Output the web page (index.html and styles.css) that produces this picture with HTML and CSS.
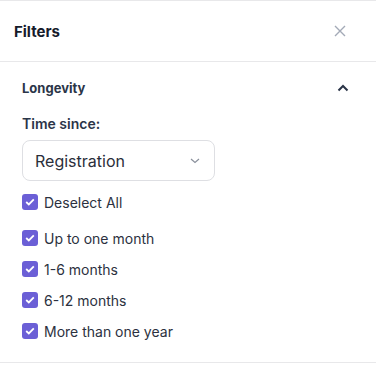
FILE: index.html
```html
<!DOCTYPE html>
<html>
  <head>
    <meta charset="utf-8">
    <title>Filters</title>
    <link rel="stylesheet" href="styles.css">
  </head>
  <body>
    <div class="panel">
      <div class="panel_head">
        <span class="panel_title">Filters</span>
        <svg class="close_icon" width="12" height="12" viewBox="0 0 12 12"><path d="M1 1L11 11M11 1L1 11" stroke="#a3aab7" stroke-width="1.4" fill="none"/></svg>
      </div>
      <div class="section">
        <div class="section_head">
          <span class="section_title">Longevity</span>
          <svg class="chev_up" width="12" height="8" viewBox="0 0 12 8"><path d="M1.5 6.5L6 2L10.5 6.5" stroke="#2a3447" stroke-width="2" fill="none"/></svg>
        </div>
        <div class="field_label">Time since:</div>
        <div class="select_box">
          <span>Registration</span>
          <svg width="10" height="6" viewBox="0 0 10 6"><path d="M1 1L5 4.5L9 1" stroke="#8a909c" stroke-width="1.2" fill="none"/></svg>
        </div>
        <label class="check_row all"><span class="box"><svg width="10" height="8" viewBox="0 0 10 8"><path d="M1.2 4L3.8 6.4L8.8 1.4" stroke="#fff" stroke-width="1.8" fill="none"/></svg></span>Deselect All</label>
        <div class="opts">
          <label class="check_row"><span class="box"><svg width="10" height="8" viewBox="0 0 10 8"><path d="M1.2 4L3.8 6.4L8.8 1.4" stroke="#fff" stroke-width="1.8" fill="none"/></svg></span>Up to one month</label>
          <label class="check_row"><span class="box"><svg width="10" height="8" viewBox="0 0 10 8"><path d="M1.2 4L3.8 6.4L8.8 1.4" stroke="#fff" stroke-width="1.8" fill="none"/></svg></span>1-6 months</label>
          <label class="check_row"><span class="box"><svg width="10" height="8" viewBox="0 0 10 8"><path d="M1.2 4L3.8 6.4L8.8 1.4" stroke="#fff" stroke-width="1.8" fill="none"/></svg></span>6-12 months</label>
          <label class="check_row"><span class="box"><svg width="10" height="8" viewBox="0 0 10 8"><path d="M1.2 4L3.8 6.4L8.8 1.4" stroke="#fff" stroke-width="1.8" fill="none"/></svg></span>More than one year</label>
        </div>
      </div>
    </div>
  </body>
</html>
```

FILE: styles.css
```css
body,html{margin:0;background:#fff;}
body{font-family:Inter,"Noto Sans",sans-serif;color:#2c3140;}
.panel{width:376px;border-top:1px solid #e8e8ea;}
.panel_head{height:60px;display:flex;align-items:center;justify-content:space-between;padding:0 30px 0 14px;border-bottom:1px solid #e8e8ea;}
.panel_title{font-size:15px;font-weight:700;color:#161b2b;}
.close_icon{display:block;}
.section{padding:0 27px 22px 22px;border-bottom:1px solid #e8e8ea;}
.section_head{height:52px;display:flex;align-items:center;justify-content:space-between;}
.section_title{font-size:13px;font-weight:700;color:#2b3548;}
.chev_up{display:block;}
.field_label{font-size:14px;font-weight:600;color:#2b3548;line-height:20px;}
.select_box{width:165px;height:39px;margin-top:6px;border:1px solid #dedfe3;border-radius:8px;display:flex;align-items:center;justify-content:space-between;padding:0 14px 0 12px;font-size:16px;color:#2a2e3a;}
.check_row{display:flex;align-items:center;gap:6px;font-size:14px;color:#2c3140;height:18px;}
.check_row.all{margin-top:12px;}
.opts{display:flex;flex-direction:column;gap:13px;margin-top:18px;}
.box{width:16px;height:16px;border-radius:3px;background:#6b5fd6;display:flex;align-items:center;justify-content:center;}
.box svg{display:block;}
```
